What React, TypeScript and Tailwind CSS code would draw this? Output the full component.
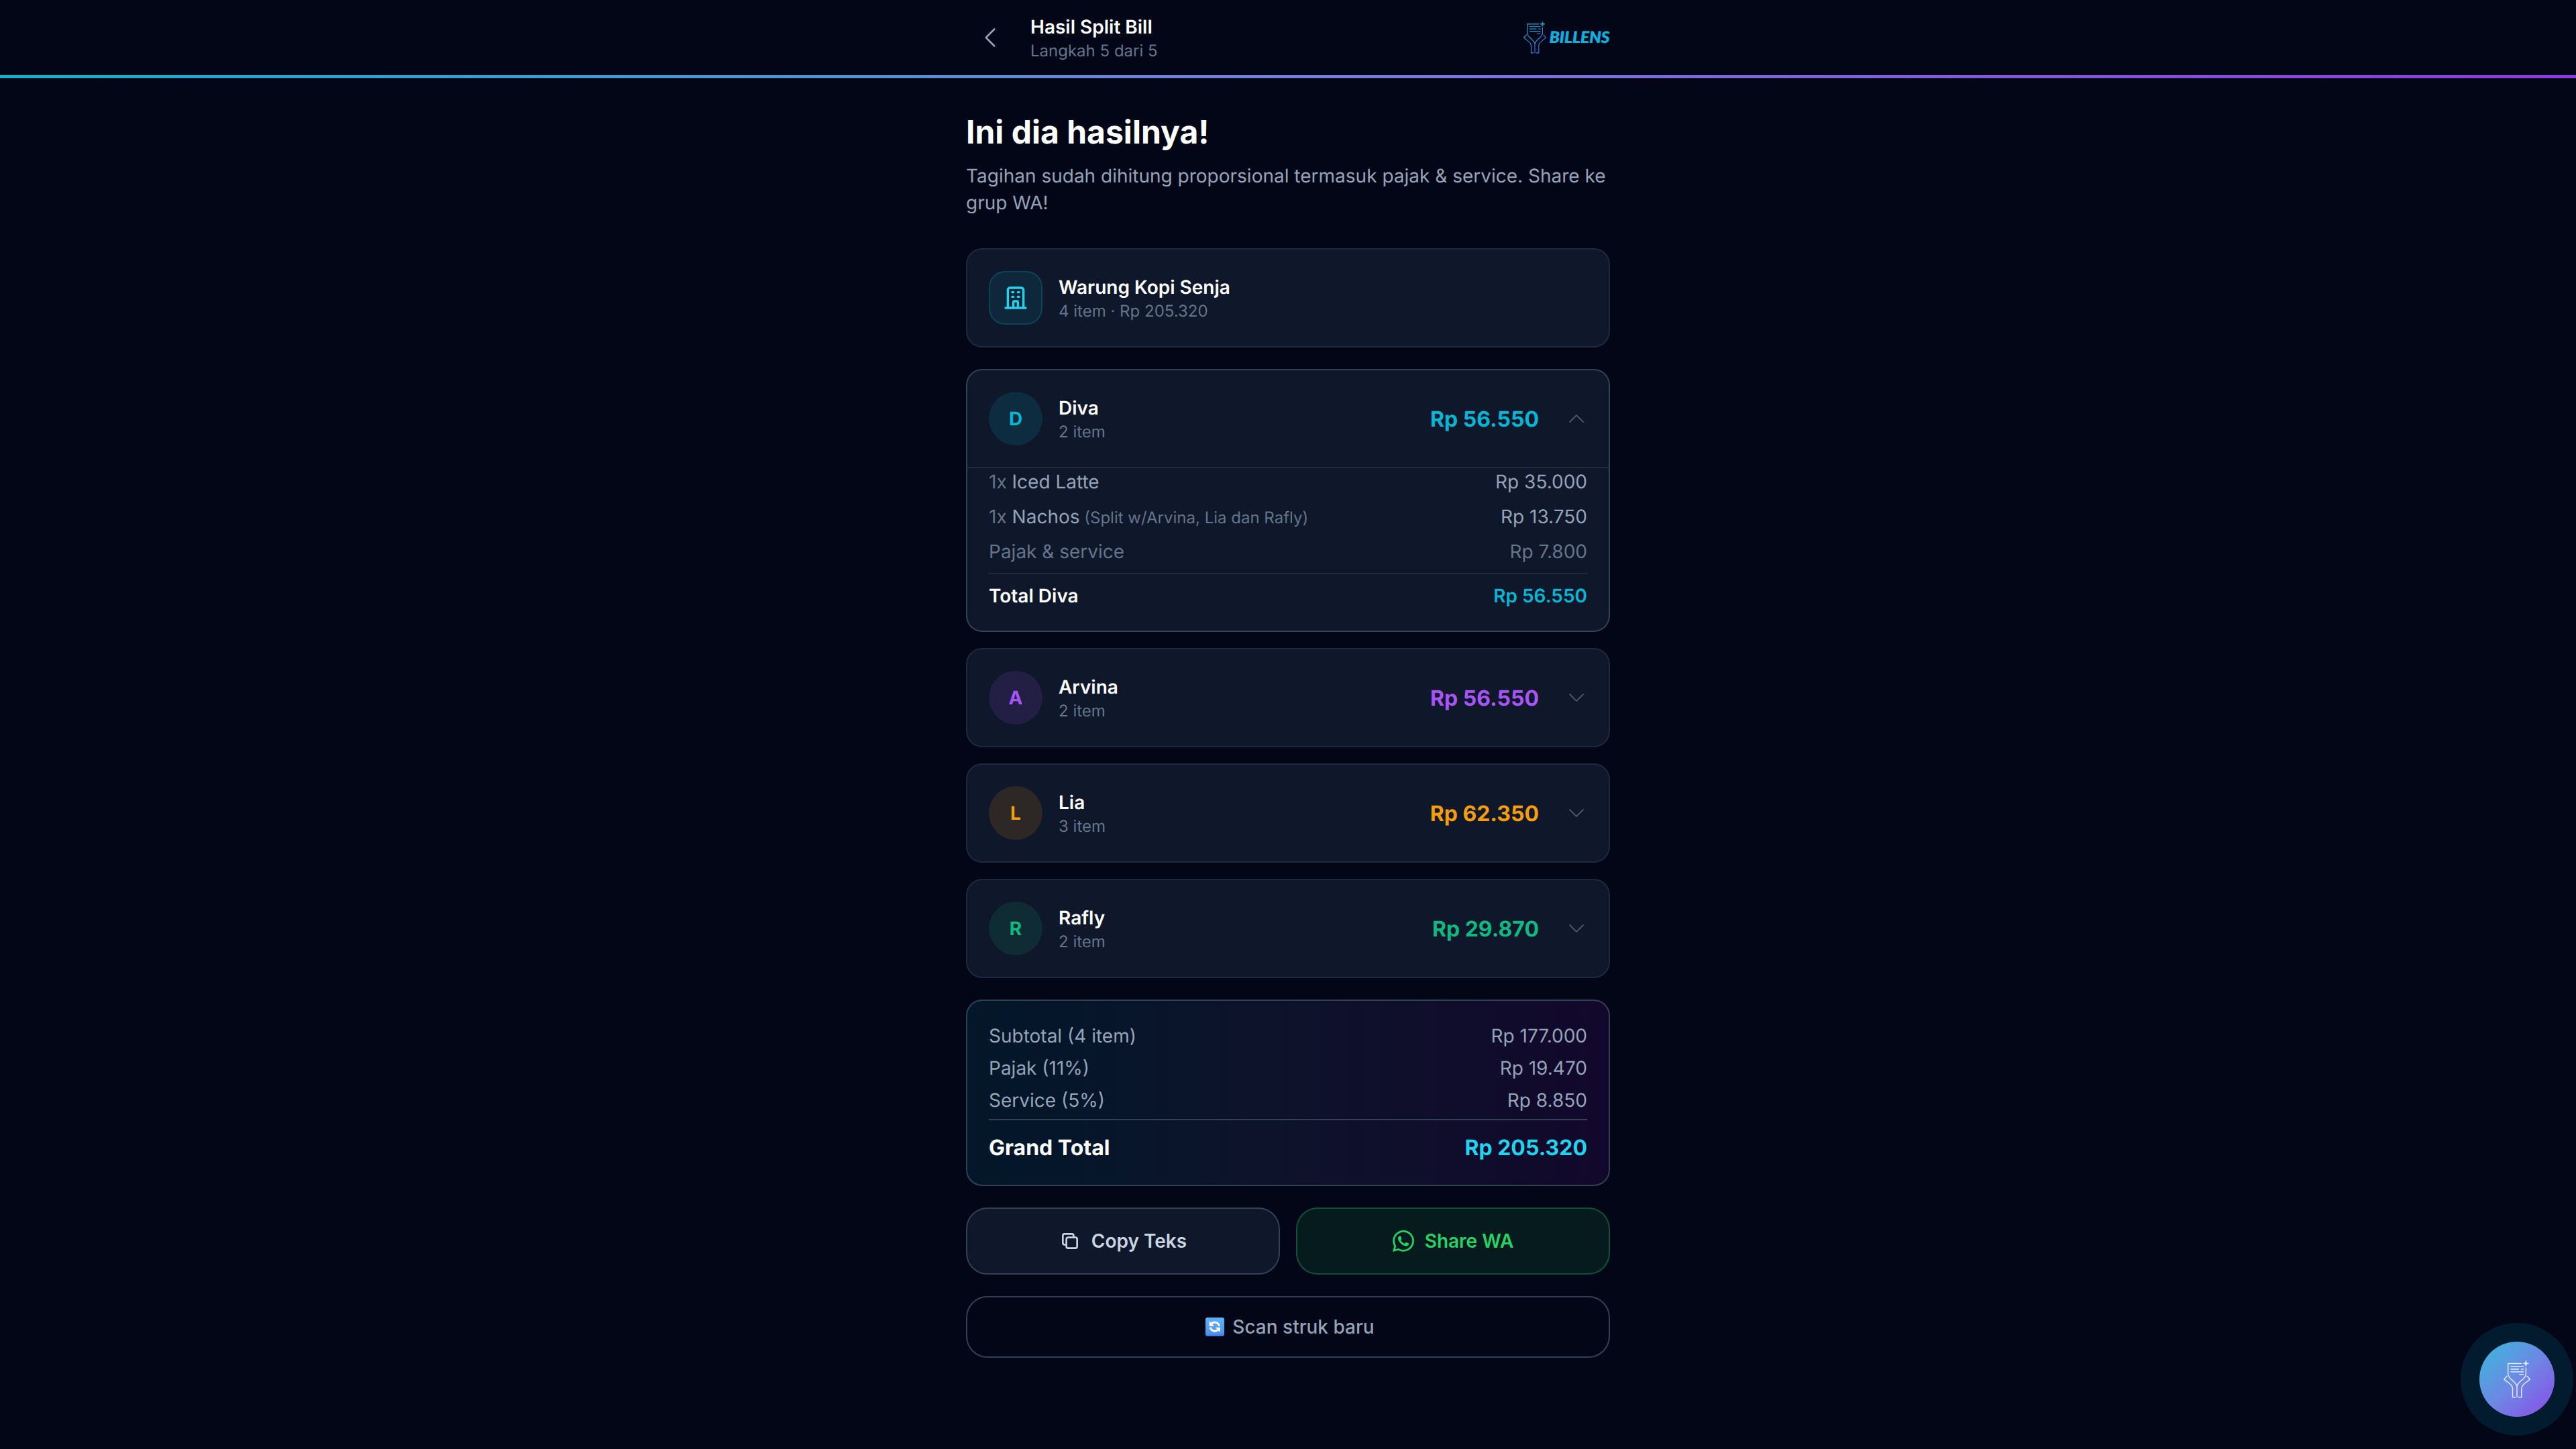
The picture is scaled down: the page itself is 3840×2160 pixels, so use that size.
type Person = {
  name: string;
  count: number;
  total: string;
  text: string;
  avatar: string;
  open?: boolean;
};

const people: Person[] = [
  { name: 'Diva', count: 2, total: 'Rp 56.550', text: 'text-[#06b6d4]', avatar: 'bg-[#06b6d4]/13', open: true },
  { name: 'Arvina', count: 2, total: 'Rp 56.550', text: 'text-[#a855f7]', avatar: 'bg-[#a855f7]/13' },
  { name: 'Lia', count: 3, total: 'Rp 62.350', text: 'text-[#f59e0b]', avatar: 'bg-[#f59e0b]/13' },
  { name: 'Rafly', count: 2, total: 'Rp 29.870', text: 'text-[#10b981]', avatar: 'bg-[#10b981]/13' },
];

const divaItems = [
  { qty: '1x', name: 'Iced Latte', note: '', price: 'Rp 35.000' },
  { qty: '1x', name: 'Nachos', note: '(Split w/Arvina, Lia dan Rafly)', price: 'Rp 13.750' },
];

const summary = [
  { label: 'Subtotal (4 item)', value: 'Rp 177.000' },
  { label: 'Pajak (11%)', value: 'Rp 19.470' },
  { label: 'Service (5%)', value: 'Rp 8.850' },
];

const icons = {
  back: 'M15.75 19.5 8.25 12l7.5-7.5',
  up: 'm4.5 15.75 7.5-7.5 7.5 7.5',
  down: 'm19.5 8.25-7.5 7.5-7.5-7.5',
  building:
    'M19 21V5a2 2 0 00-2-2H7a2 2 0 00-2 2v16m14 0h2m-2 0h-5m-9 0H3m2 0h5M9 7h1m-1 4h1m4-4h1m-1 4h1m-5 10v-5a1 1 0 011-1h2a1 1 0 011 1v5m-4 0h4',
  copy: 'M8 16H6a2 2 0 01-2-2V6a2 2 0 012-2h8a2 2 0 012 2v2m-6 12h8a2 2 0 002-2v-8a2 2 0 00-2-2h-8a2 2 0 00-2 2v8a2 2 0 002 2z',
};

function Icon({ name, className, width = 1.5 }: { name: keyof typeof icons; className: string; width?: number }) {
  return (
    <svg viewBox="0 0 24 24" className={className} fill="none" stroke="currentColor" strokeWidth={width} strokeLinecap="round" strokeLinejoin="round">
      <path d={icons[name]} />
    </svg>
  );
}

function ReceiptHands({ className, stroke, width = 1 }: { className: string; stroke: string; width?: number }) {
  return (
    <svg viewBox="0 0 40 56" className={className} fill="none" stroke={stroke} strokeWidth={width}>
      <defs>
        <linearGradient id="logo-blue" gradientUnits="userSpaceOnUse" x1="0" y1="0" x2="40" y2="50">
          <stop offset="0" stopColor="#14b8c8" />
          <stop offset="1" stopColor="#3b6fe8" />
        </linearGradient>
      </defs>
      <path d="M27 4.500H6.700V20c0 9 13.300 10.500 13.300 20v15M33.400 10.500V20c0 9-13.400 10.500-13.400 20" />
      <path d="M10.500 9H30M10.500 13H23M26 13H30M10.500 17H30M23.300 21H30" />
      <path d="M5.500 23 .8 28C3.500 32 13.500 34.500 13.500 42v12.700H18M34.700 23l4.500 5C36.500 32 26.800 34.500 26.800 42v12.700H22" />
      <path
        d="M33.300.200c.5 3 1.200 3.700 4.200 4.300-3 .6-3.700 1.300-4.200 4.300-.5-3-1.200-3.700-4.200-4.300 3-.6 3.700-1.300 4.200-4.300Z"
        fill={stroke}
        strokeWidth={0.8}
      />
    </svg>
  );
}

function RefreshTile() {
  return (
    <svg viewBox="0 0 84 84" className="mr-3 ml-1.5 size-7">
      <defs>
        <linearGradient id="tile" x1="0" y1="0" x2="0" y2="1">
          <stop offset="0" stopColor="#5eb2ff" />
          <stop offset="0.85" stopColor="#4f94ee" />
          <stop offset="1" stopColor="#3f73d8" />
        </linearGradient>
      </defs>
      <rect width="84" height="84" rx="9" fill="url(#tile)" />
      <path d="M17 15v23h22ZM66 67V44H44Z" fill="#fff" />
      <path d="M25 29C34 18 55 18 62 38M58 53C49 64 28 64 21 44" fill="none" stroke="#fff" strokeWidth="9" />
    </svg>
  );
}

function PersonCard({ person }: { person: Person }) {
  return (
    <div className={`rounded-3xl border-2 bg-[#0f172a] ${person.open ? 'border-[#334155]' : 'border-[#1e293b]'}`}>
      <div className="flex items-center gap-6 p-8">
        <div className={`flex size-20 items-center justify-center rounded-full text-[28px] font-bold ${person.avatar} ${person.text}`}>
          {person.name[0]}
        </div>
        <div className="flex-1">
          <p className="text-[28px] leading-10 font-semibold text-white">{person.name}</p>
          <p className="text-2xl text-[#64748b]">{person.count} item</p>
        </div>
        <span className={`mr-4 pt-px text-[32px] leading-12 font-bold ${person.text}`}>{person.total}</span>
        <Icon name={person.open ? 'up' : 'down'} className="size-8 text-[#475569]" />
      </div>
      {person.open && (
        <div className="border-t-2 border-[#1e293b] px-8 pb-8 text-[28px] leading-10">
          <div className="flex flex-col gap-3">
            {divaItems.map((item) => (
              <div key={item.name} className="flex justify-between text-[#94a3b8]">
                <span>
                  <span className="text-[#64748b]">{item.qty}</span> {item.name}
                  {item.note && <span className="text-2xl leading-none text-[#64748b]"> {item.note}</span>}
                </span>
                <span>{item.price}</span>
              </div>
            ))}
            <div className="flex justify-between text-[#64748b]">
              <span>Pajak &amp; service</span>
              <span>Rp 7.800</span>
            </div>
          </div>
          <div className="mt-3 flex justify-between border-t-2 border-[#1e293b] pt-3 font-semibold">
            <span className="text-white">Total {person.name}</span>
            <span className={person.text}>{person.total}</span>
          </div>
        </div>
      )}
    </div>
  );
}

export default function App() {
  return (
    <div className="min-h-[2160px] bg-[#020617] font-['Inter',sans-serif] [text-rendering:geometricPrecision]">
      <header className="border-b-2 border-[#0f172a]">
        <div className="mx-auto flex h-28 w-[960px] items-center">
          <button className="flex size-[72px] items-center justify-center">
            <Icon name="back" className="size-10 text-[#94a3b8]" />
          </button>
          <div className="ml-6 flex-1">
            <h1 className="text-[28px] leading-10 font-semibold text-white">Hasil Split Bill</h1>
            <p className="text-2xl text-[#64748b]">Langkah 5 dari 5</p>
          </div>
          <div className="flex items-center gap-1">
            <ReceiptHands className="h-12 w-9" stroke="url(#logo-blue)" width={1.3} />
            <span className="font-['Lato',sans-serif] text-2xl leading-none font-black tracking-[0.3px] text-[#06b6d4] italic [text-shadow:-1px_0_0_#3b6fe8]">
              BILLENS
            </span>
          </div>
        </div>
        <div className="h-1 bg-linear-to-r/srgb from-[#06b6d4] via-[#777fdf] to-[#9333ea]" />
      </header>

      <main className="mx-auto w-[960px] pt-12">
        <h2 className="text-5xl leading-[61px] font-bold text-white">Ini dia hasilnya!</h2>
        <p className="mt-[15px] text-[28px] leading-10 text-[#94a3b8]">
          Tagihan sudah dihitung proporsional termasuk pajak &amp; service. Share ke grup WA!
        </p>

        <div className="mt-12 flex items-center gap-6 rounded-3xl border-2 border-[#1e293b] bg-[#0f172a] p-8">
          <div className="flex size-20 items-center justify-center rounded-3xl border-2 border-[#06b6d4]/20 bg-[#06b6d4]/10">
            <Icon name="building" className="size-10 text-[#22d3ee]" width={2} />
          </div>
          <div>
            <p className="text-[28px] leading-10 font-semibold text-white">Warung Kopi Senja</p>
            <p className="text-2xl text-[#64748b]">4 item · Rp 205.320</p>
          </div>
        </div>

        <div className="mt-8 flex flex-col gap-6">
          {people.map((person) => (
            <PersonCard key={person.name} person={person} />
          ))}
        </div>

        <div className="mt-8 rounded-3xl border-2 border-[#334155] bg-linear-to-r/srgb from-[#021729] via-[#0d122b] to-[#12082b] p-8">
          <div className="flex flex-col gap-2 text-[28px] leading-10 text-[#94a3b8]">
            {summary.map((row) => (
              <div key={row.label} className="flex justify-between">
                <span>{row.label}</span>
                <span>{row.value}</span>
              </div>
            ))}
          </div>
          <div className="mt-2 flex justify-between border-t-2 border-[#334155] pt-[17px] text-[32px] leading-[47px] font-bold">
            <span className="text-white">Grand Total</span>
            <span className="text-[#22d3ee]">Rp 205.320</span>
          </div>
        </div>

        <div className="mt-8 grid grid-cols-2 gap-6 text-[28px] leading-10 font-semibold">
          <button className="flex h-[100px] items-center justify-center gap-4 rounded-[32px] border-2 border-[#334155] bg-[#0f172a] text-[#cbd5e1]">
            <Icon name="copy" className="size-8" width={2} />
            Copy Teks
          </button>
          <button className="flex h-[100px] items-center justify-center gap-4 rounded-[32px] border-2 border-[#25d366]/30 bg-[#25d366]/10 text-[#25d366]">
            <svg viewBox="0 0 24 24" className="size-8" fill="currentColor">
              <path d="M17.472 14.382c-.297-.149-1.758-.867-2.030-.967-.273-.099-.471-.148-.670.150-.197.297-.767.966-.940 1.164-.173.199-.347.223-.644.075-.297-.150-1.255-.463-2.390-1.475-.883-.788-1.480-1.761-1.653-2.059-.173-.297-.018-.458.130-.606.134-.133.298-.347.446-.520.149-.174.198-.298.298-.497.099-.198.050-.371-.025-.520-.075-.149-.669-1.612-.916-2.207-.242-.579-.487-.500-.669-.510-.173-.008-.371-.010-.570-.010-.198 0-.520.074-.792.372-.272.297-1.040 1.016-1.040 2.479 0 1.462 1.065 2.875 1.213 3.074.149.198 2.096 3.200 5.077 4.487.709.306 1.262.489 1.694.625.712.227 1.360.195 1.871.118.571-.085 1.758-.719 2.006-1.413.248-.694.248-1.289.173-1.413-.074-.124-.272-.198-.570-.347m-5.421 7.403h-.004a9.870 9.870 0 01-5.031-1.378l-.361-.214-3.741.982.998-3.648-.235-.374a9.860 9.860 0 01-1.510-5.260c.001-5.450 4.436-9.884 9.888-9.884 2.640 0 5.122 1.030 6.988 2.898a9.825 9.825 0 012.893 6.994c-.003 5.450-4.437 9.884-9.885 9.884m8.413-18.297A11.815 11.815 0 0012.050 0C5.495 0 .160 5.335.157 11.892c0 2.096.547 4.142 1.588 5.945L.057 24l6.305-1.654a11.882 11.882 0 005.683 1.448h.005c6.554 0 11.890-5.335 11.893-11.893a11.821 11.821 0 00-3.480-8.413z" />
            </svg>
            Share WA
          </button>
        </div>

        <button className="mt-8 flex h-[92px] w-full items-center justify-center rounded-[32px] border-2 border-[#334155] text-[28px] leading-10 font-medium text-[#94a3b8]">
          <RefreshTile />
          Scan struk baru
        </button>
      </main>

      <div className="fixed right-1 bottom-5 flex size-[168px] items-center justify-center rounded-full bg-[#06b6d4]/12">
        <div className="flex size-28 items-center justify-center rounded-full bg-linear-to-br/srgb from-[#36bbdb] via-[#6d88e4] to-[#8c49e8]">
          <ReceiptHands className="h-14 w-10" stroke="#dcebff" width={1.5} />
        </div>
      </div>
    </div>
  );
}
